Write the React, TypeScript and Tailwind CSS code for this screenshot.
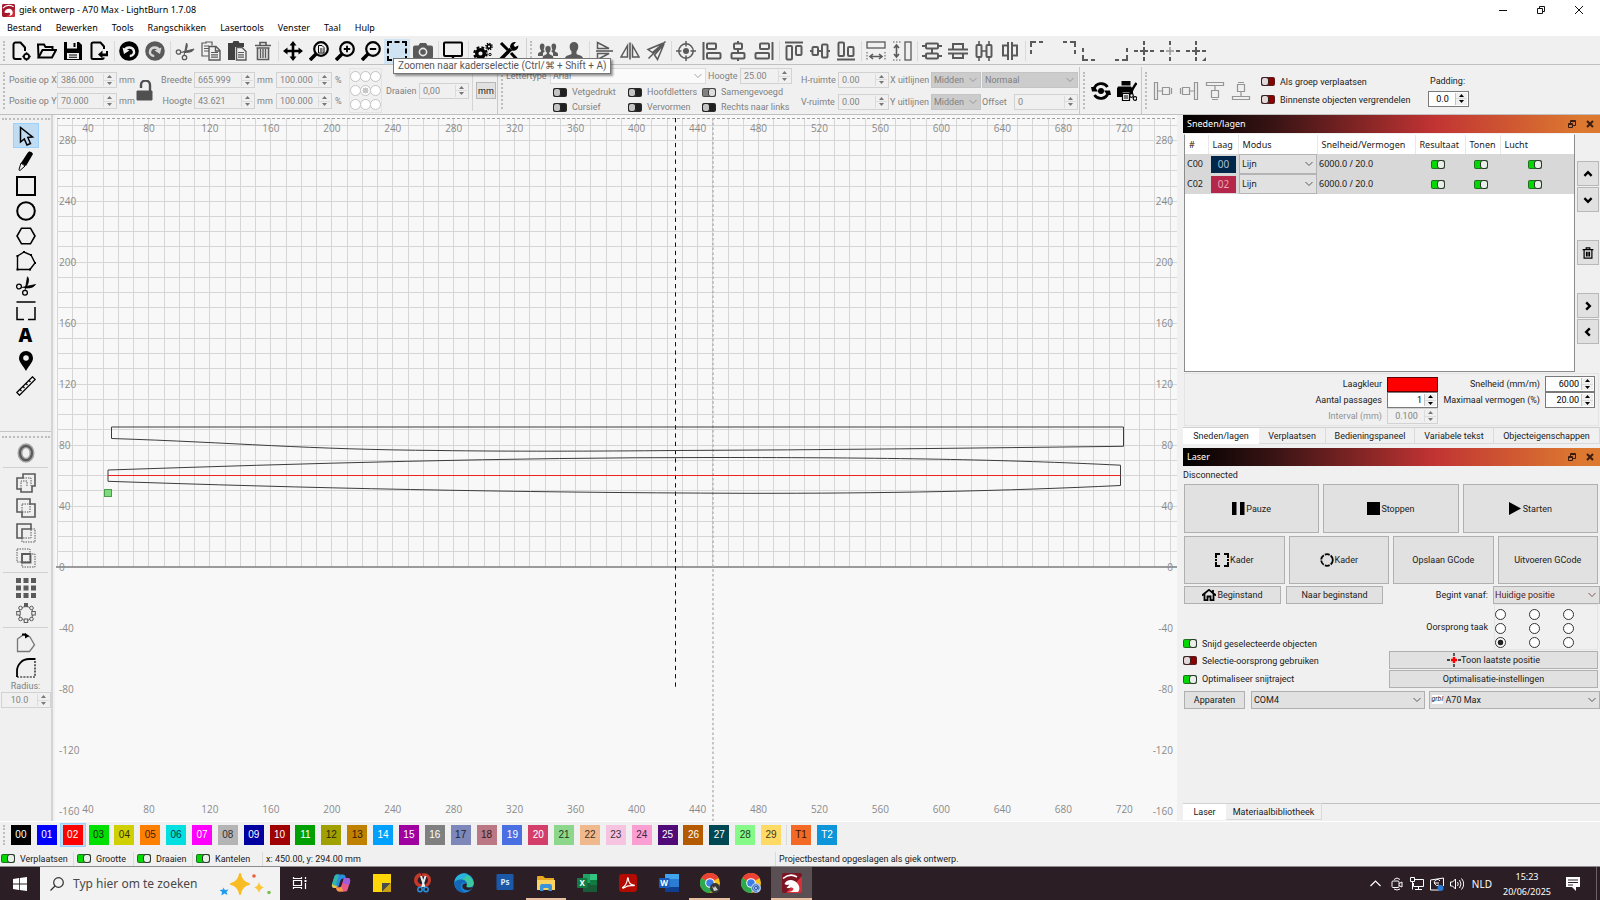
import type { ReactNode } from "react"
import clsx from "clsx"

const swatches: { id: string; cls: string }[] = [
  { id: "00", cls: "bg-black text-white" },
  { id: "01", cls: "bg-[#0000ff] text-white" },
  { id: "02", cls: "bg-[#ff0000] text-white" },
  { id: "03", cls: "bg-[#00e000] text-[#202020]" },
  { id: "04", cls: "bg-[#d0d000] text-[#303000]" },
  { id: "05", cls: "bg-[#ff8000] text-[#402000]" },
  { id: "06", cls: "bg-[#00e0e0] text-[#003838]" },
  { id: "07", cls: "bg-[#ff00ff] text-white" },
  { id: "08", cls: "bg-[#b4b4b4] text-[#303030]" },
  { id: "09", cls: "bg-[#0000a0] text-white" },
  { id: "10", cls: "bg-[#a00000] text-white" },
  { id: "11", cls: "bg-[#00a000] text-white" },
  { id: "12", cls: "bg-[#a0a000] text-[#282800]" },
  { id: "13", cls: "bg-[#c08000] text-[#302000]" },
  { id: "14", cls: "bg-[#00a0ff] text-white" },
  { id: "15", cls: "bg-[#a000a0] text-white" },
  { id: "16", cls: "bg-[#808080] text-white" },
  { id: "17", cls: "bg-[#7d87b9] text-[#20202c]" },
  { id: "18", cls: "bg-[#bb7784] text-[#301c20]" },
  { id: "19", cls: "bg-[#4a6fe3] text-white" },
  { id: "20", cls: "bg-[#d33f6a] text-white" },
  { id: "21", cls: "bg-[#8cd78c] text-[#203820]" },
  { id: "22", cls: "bg-[#f0b98d] text-[#403020]" },
  { id: "23", cls: "bg-[#f6c4e1] text-[#403038]" },
  { id: "24", cls: "bg-[#fa9ed4] text-[#402838]" },
  { id: "25", cls: "bg-[#500a78] text-white" },
  { id: "26", cls: "bg-[#b45a00] text-white" },
  { id: "27", cls: "bg-[#004754] text-white" },
  { id: "28", cls: "bg-[#86fa88] text-[#204020]" },
  { id: "29", cls: "bg-[#ffdb66] text-[#403818]" },
]

const menus = ["Bestand", "Bewerken", "Tools", "Rangschikken", "Lasertools", "Venster", "Taal", "Hulp"]

/* ---------- small building blocks ---------- */

function Svg({ children, size = 20 }: { children: ReactNode; size?: number }) {
  return (
    <svg
      width={size}
      height={size}
      viewBox="0 0 20 20"
      fill="none"
      stroke="currentColor"
      strokeWidth="2"
      className="shrink-0"
      aria-hidden="true"
    >
      {children}
    </svg>
  )
}

function ToolButton({ label, active, dim, children }: { label: string; active?: boolean; dim?: boolean; children: ReactNode }) {
  return (
    <button
      aria-label={label}
      className={clsx(
        "flex h-[25px] w-[26px] shrink-0 items-center justify-center",
        active && "bg-[#cfe3f3]",
        dim ? "text-[#5a5a5a]" : "text-black",
      )}
    >
      <Svg>{children}</Svg>
    </button>
  )
}

function Sep() {
  return <div className="mx-px h-5 w-[2px] shrink-0 border-r border-[#dadada]" />
}

function Handle() {
  return <div className="mx-[3px] h-[80%] w-[2px] shrink-0 border-l-2 border-dotted border-[#bdbdbd]" />
}

function Stepper({ dim }: { dim?: boolean }) {
  return (
    <span className={clsx("flex w-3 shrink-0 flex-col border-l", dim ? "border-[#dcdcdc] text-[#777]" : "border-[#c4c4c4] text-black")}>
      <button tabIndex={-1} aria-label="+" className="flex flex-1 items-center justify-center border-b border-[#dcdcdc] bg-[#f0f0f0]">
        <svg width="5" height="3" viewBox="0 0 5 3" fill="currentColor"><path d="M0 3 2.5 0 5 3z" /></svg>
      </button>
      <button tabIndex={-1} aria-label="-" className="flex flex-1 items-center justify-center bg-[#f0f0f0]">
        <svg width="5" height="3" viewBox="0 0 5 3" fill="currentColor"><path d="M0 0 2.5 3 5 0z" /></svg>
      </button>
    </span>
  )
}

type SpinProps = { id: string; value: string; box: string; dim?: boolean; align?: string }

function Spin({ id, value, box, dim, align }: SpinProps) {
  return (
    <span className={clsx("flex h-4 shrink-0 border p-px", box, dim ? "border-[#d2d2d2] bg-[#f0f0f0]" : "border-[#7a7a7a] bg-white")}>
      <input
        id={id}
        defaultValue={value}
        className={clsx("w-0 min-w-0 flex-1 bg-transparent px-[2px] outline-none", align, dim ? "text-[#838383]" : "text-black")}
      />
      <Stepper dim={dim} />
    </span>
  )
}

type ToggleProps = { label: string; on?: boolean; bare?: boolean; tone: "green" | "red" | "dark" | "grey"; className?: string }

function Toggle({ label, on, bare, tone, className }: ToggleProps) {
  const tones = {
    green: "bg-[#00d800] after:bg-[#e6f0e6] after:border-[#303030]",
    red: "bg-[#8c0000] after:bg-[#e4d8d8] after:border-[#302020]",
    dark: "bg-[#202020] after:bg-[#c4c4c4] after:border-[#202020]",
    grey: "bg-[#808080] after:bg-[#dedede] after:border-[#404040]",
  }
  return (
    <label className={clsx("flex items-center gap-[5px] whitespace-nowrap", className)}>
      <input
        type="checkbox"
        defaultChecked={on}
        aria-label={label}
        className={clsx(
          "flex h-[9px] w-[14px] shrink-0 appearance-none rounded-[2px] border border-[#303030]/60 after:-my-px after:w-[8px] after:rounded-[3px] after:border after:content-['']",
          on ? "justify-end after:-mr-px" : "after:-ml-px",
          tones[tone],
        )}
      />
      {!bare && label}
    </label>
  )
}

function Select({ id, value, className, selectClass, name }: { id: string; value: string; className: string; selectClass?: string; name?: string }) {
  return (
    <span className={clsx("relative flex border", className)}>
      <select id={id} aria-label={name} className={clsx("w-full appearance-none bg-transparent outline-none", selectClass ?? "px-[2px]")}>
        <option>{value}</option>
      </select>
      <svg
        width="8"
        height="5"
        viewBox="0 0 8 5"
        fill="none"
        stroke="currentColor"
        className="pointer-events-none absolute top-1/2 right-[3px] -translate-y-1/2 opacity-70"
        aria-hidden="true"
      >
        <path d="M.5.5 4 4 7.5.5" />
      </svg>
    </span>
  )
}

/* ---------- top bars ---------- */

function TitleBar() {
  return (
    <header className="flex h-5 items-center bg-white pr-4 pl-[2px] font-['Noto_Sans',sans-serif] text-black">
      <svg width="13" height="13" viewBox="0 0 28 28" aria-hidden="true">
        <rect width="28" height="28" rx="3" fill="#a3192c" />
        <path d="M28 10v15q0 3-3 3H8z" fill="#c8303c" />
        <path d="M2 9C8 2 18 1 25 6" stroke="#fff" strokeWidth="2.5" fill="none" />
        <path d="M5 18c1-5 5-8 10-8 6 0 9 5 8 10-1 4-4 6-8 6 3-2 4-6 1-7-4-1-7 2-11-1z" fill="#fff" />
      </svg>
      <h1 className="ml-1 flex-1">giek ontwerp - A70 Max - LightBurn 1.7.08</h1>
      <div className="flex gap-7">
        <button aria-label="Minimaliseren">
          <svg width="10" height="10" stroke="#111"><path d="M1 5.5h8" /></svg>
        </button>
        <button aria-label="Vorig formaat">
          <svg width="10" height="10" fill="none" stroke="#111"><path d="M1.5 3.5h5v5h-5zM3.5 3V1.5h5v5H7" /></svg>
        </button>
        <button aria-label="Sluiten">
          <svg width="10" height="10" stroke="#111"><path d="m1 1 8 8M9 1 1 9" /></svg>
        </button>
      </div>
    </header>
  )
}

function MenuBar() {
  return (
    <nav className="flex h-4 items-center gap-[14px] bg-white pl-[7px] font-['Noto_Sans',sans-serif] text-black">
      {menus.map((m) => (
        <button key={m}>{m}</button>
      ))}
    </nav>
  )
}

function MainToolbar() {
  return (
    <div className="flex h-[29px] items-center border-b border-[#c0c0c0] bg-[#f0f0f0] pt-[2px]">
      <Handle />
      <ToolButton label="Nieuw">
        <path d="M10.5 18h-6a2 2 0 0 1-2-2V3.5a2 2 0 0 1 2-2h5l4.500 5V10" />
        <circle cx="15.5" cy="15.5" r="2.6" strokeWidth="1.8" />
        <path d="M15.5 11.300v1.500M15.5 18.200v1.500M11.300 15.500h1.500M18.200 15.500h1.500" strokeWidth="1.5" />
      </ToolButton>
      <ToolButton label="Openen">
        <path d="M1.5 16 1 3.5h6L8.500 6h7v3" />
        <path d="m1.5 16.500 4-7.500H19l-4 7.500z" />
      </ToolButton>
      <ToolButton label="Opslaan">
        <path d="M1 1h15l3 3v15H1z" fill="currentColor" stroke="none" />
        <path d="M4 1h10v6.500H4zM4 12h12v6H4z" fill="#f0f0f0" stroke="none" />
        <path d="M10.500 2h2v4h-2zM6 13.500h8v1H6zM6 15.700h8v1H6z" fill="currentColor" stroke="none" />
      </ToolButton>
      <ToolButton label="Importeren">
        <path d="M15 8V5.500l-3.500-4H4A1.500 1.500 0 0 0 2.500 3v13.500A1.500 1.500 0 0 0 4 18h9a2 2 0 0 0 2-1.500" />
        <path d="m9 13.500 4.500-4v3H17V10h2v5.200h-5.500v2.300z" fill="currentColor" stroke="none" />
      </ToolButton>
      <Sep />
      <ToolButton label="Ongedaan maken">
        <circle cx="10" cy="10" r="9.8" fill="currentColor" stroke="none" />
        <path d="M5.500 9.500C7 6 13 5 14.800 9.500c1 3-1 5.500-4 5.500" stroke="#f0f0f0" strokeWidth="2.4" />
        <path d="M3.500 6.500 5 13l5.500-3.500z" fill="#f0f0f0" stroke="none" />
      </ToolButton>
      <ToolButton label="Opnieuw" dim>
        <circle cx="10" cy="10" r="9.8" fill="currentColor" stroke="none" />
        <path d="M14.500 9.500C13 6 7 5 5.200 9.500c-1 3 1 5.500 4 5.500" stroke="#d8d8d8" strokeWidth="2.4" />
        <path d="M16.500 6.500 15 13l-5.500-3.500z" fill="#d8d8d8" stroke="none" />
      </ToolButton>
      <Sep />
      <ToolButton label="Knippen" dim>
        <circle cx="3.5" cy="11" r="2.2" strokeWidth="1.3" />
        <circle cx="9.5" cy="16.5" r="2.2" strokeWidth="1.3" />
        <path d="M5.500 11.500 19 8c-1 2.500-4 3.500-9 3.500M9 14.500 11.500 2c1.500 2 .5 6-1.500 10" fill="currentColor" strokeWidth="1" />
      </ToolButton>
      <ToolButton label="Kopiëren" dim>
        <path d="M11 4.500V1H5v1H1v13h6.500" strokeWidth="1.2" />
        <path d="M3 5h5M3 7.500h5M3 10h5" strokeWidth="1" />
        <path d="M8 5.500h7l4 4V19H8zM14.500 6v4H19" strokeWidth="1.4" />
        <path d="M10 11.500h7M10 13.800h7M10 16.200h7" strokeWidth="1.2" />
      </ToolButton>
      <ToolButton label="Plakken" dim>
        <path d="M1 2h4.500l1-2h5l1 2H17v4H8v13H1z" fill="#404040" stroke="none" />
        <path d="M9.500 6.500H15l4 4V19H9.500z" fill="#f0f0f0" strokeWidth="1.4" />
        <path d="M11 11.500h6M11 13.800h6M11 16.200h6" strokeWidth="1.2" />
      </ToolButton>
      <ToolButton label="Verwijderen" dim>
        <path d="M2 4.500h16M7 4V1.500h6V4M3.500 7h13M4.500 7v11.500h11V7" strokeWidth="1.6" />
        <path d="M7.500 8v9M10 8v9M12.500 8v9" strokeWidth="1.4" />
      </ToolButton>
      <Sep />
      <ToolButton label="Verschuiven">
        <path d="M10 2v16M2 10h16" strokeWidth="2.6" />
        <path d="m10 0 3.500 4.500h-7zM10 20l3.500-4.500h-7zM0 10l4.500-3.500v7zM20 10l-4.500-3.500v7z" fill="currentColor" stroke="none" />
      </ToolButton>
      <ToolButton label="Zoom naar pagina">
        <circle cx="12" cy="8" r="6.8" strokeWidth="2.2" />
        <path d="m7 13-6 6" strokeWidth="3.6" />
        <path d="M9.500 4.500H13l2 2V12H9.500zM11 8h2.500M11 10h2.500" strokeWidth="1" />
      </ToolButton>
      <ToolButton label="Inzoomen">
        <circle cx="12" cy="8" r="6.8" strokeWidth="2.2" />
        <path d="m7 13-6 6" strokeWidth="3.6" />
        <path d="M12 4.800v6.400M8.800 8h6.400" strokeWidth="1.8" />
      </ToolButton>
      <ToolButton label="Uitzoomen">
        <circle cx="12" cy="8" r="6.8" strokeWidth="2.2" />
        <path d="m7 13-6 6" strokeWidth="3.6" />
        <path d="M8.800 8h6.400" />
      </ToolButton>
      <ToolButton label="Zoomen naar kaderselectie" active>
        <path d="M1 5V1h4M7.500 1h5M15 1h4v4M19 7.500v5M19 15v4h-4M12.500 19h-5M5 19H1v-4M1 12.500v-5" />
      </ToolButton>
      <ToolButton label="Camera" dim>
        <path d="M0 6.500q0-2 2-2h3.500L7 2h6l1.500 2.500H18q2 0 2 2V16q0 2-2 2H2q-2 0-2-2z" fill="currentColor" stroke="none" />
        <circle cx="10" cy="11" r="3.6" stroke="#e8e8e8" strokeWidth="1.6" />
      </ToolButton>
      <Sep />
      <ToolButton label="Voorbeeld">
        <rect x="1" y="1.5" width="18" height="13.5" rx="1" />
        <path d="M6 18.500h8M10 15v3" strokeWidth="2.4" />
      </ToolButton>
      <Sep />
      <ToolButton label="Instellingen">
        <circle cx="7.5" cy="12.5" r="3.8" strokeWidth="3.4" />
        <circle cx="7.5" cy="12.5" r="6.2" strokeWidth="2.2" strokeDasharray="2.8 2.1" />
        <circle cx="16" cy="5.5" r="1.9" strokeWidth="1.6" />
        <circle cx="16" cy="5.5" r="3.2" strokeWidth="1.3" strokeDasharray="1.3 1.2" />
        <circle cx="17" cy="13.5" r="1.2" strokeWidth="1" />
      </ToolButton>
      <ToolButton label="Apparaatinstellingen">
        <path d="m2 2 7 7M12 12l6 6.500" strokeWidth="3" />
        <path d="M1.500 18.500 12 8" strokeWidth="3.6" />
        <path d="M11 6a5 5 0 0 1 6-5l-2.500 3L16 6l3.500-1.500A5 5 0 0 1 13 9.500z" fill="currentColor" stroke="none" />
      </ToolButton>
      <div className="h-full w-[5px] shrink-0 border-r border-[#d0d0d0]" />
      <Handle />
      <ToolButton label="Groeperen" dim>
        <path d="M4 2.500a2.500 2.800 0 0 1 2.500 3c0 2-.8 2.800-1 3.500L7 10l-2 2v3H0v-2c0-1.500 2-2 3-2.500V9.200C1.500 8 1 2.500 4 2.500zM16 2.500a2.500 2.800 0 0 0-2.500 3c0 2 .8 2.800 1 3.500L13 10l2 2v3h5v-2c0-1.500-2-2-3-2.500V9.200c1.500-1.200 2-6.700-1-6.700z" fill="currentColor" stroke="none" />
        <path d="M10 4.500c4 0 3.500 5.500 1.700 7V13c1.300.8 4 1.200 4 3v3H4.300v-3c0-1.800 2.700-2.200 4-3v-1.500C6.500 10 6 4.500 10 4.500z" fill="currentColor" stroke="#f0f0f0" strokeWidth=".8" />
      </ToolButton>
      <ToolButton label="Degroeperen" dim>
        <path d="M10 1c5.500 0 5 7 2.500 9.500V13c2 1.200 6.500 1.500 6.500 4.500V19H1v-1.500C1 14.500 5.500 14.200 7.500 13v-2.500C5 8 4.500 1 10 1z" fill="currentColor" stroke="none" />
      </ToolButton>
      <Sep />
      <ToolButton label="Verticaal spiegelen" dim>
        <path d="M3.500 1.500v6H15zM3.500 18.500v-6H15z" strokeWidth="1.5" />
        <path d="M2 10h17" strokeWidth="1.6" />
      </ToolButton>
      <ToolButton label="Horizontaal spiegelen" dim>
        <path d="M7.500 4.500V16H1zM12.500 4.500V16H19z" strokeWidth="1.5" />
        <path d="M10 1.500v17" strokeWidth="1.6" />
      </ToolButton>
      <ToolButton label="Spiegelen over lijn" dim>
        <path d="M17.500 2 2 8.500l4.500 3zM18 3l-6.500 15.500-3-4.500zM19.500.5l-17 17" strokeWidth="1.5" />
      </ToolButton>
      <Sep />
      <ToolButton label="Op pagina centreren" dim>
        <circle cx="10" cy="10" r="7.2" strokeWidth="1.5" />
        <circle cx="10" cy="10" r="3" fill="currentColor" stroke="none" />
        <path d="M10 0v5.500M10 14.500V20M0 10h5.500M14.500 10H20" strokeWidth="1.5" />
      </ToolButton>
      <ToolButton label="Links uitlijnen" dim>
        <path d="M1.500 1v18" />
        <rect x="5" y="2.5" width="9" height="5.5" rx="1" />
        <rect x="5" y="12" width="13.5" height="5.5" rx="1" />
      </ToolButton>
      <ToolButton label="Centreren" dim>
        <path d="M10 0v2.500M10 8v4M10 17.500V20" />
        <rect x="6" y="2.5" width="8" height="5.5" rx="1" />
        <rect x="3.5" y="12" width="13" height="5.5" rx="1" />
      </ToolButton>
      <ToolButton label="Rechts uitlijnen" dim>
        <path d="M18.500 1v18" />
        <rect x="6" y="2.5" width="9" height="5.5" rx="1" />
        <rect x="1.5" y="12" width="13.5" height="5.5" rx="1" />
      </ToolButton>
      <Sep />
      <ToolButton label="Boven uitlijnen" dim>
        <path d="M1 1.500h18" />
        <rect x="2.5" y="5" width="5.5" height="13.5" rx="1" />
        <rect x="12" y="5" width="5.5" height="9" rx="1" />
      </ToolButton>
      <ToolButton label="Midden uitlijnen" dim>
        <path d="M0 10h2.500M8 10h4M17.500 10H20" />
        <rect x="2.5" y="6" width="5.5" height="8" rx="1" />
        <rect x="12" y="3.5" width="5.5" height="13" rx="1" />
      </ToolButton>
      <ToolButton label="Onder uitlijnen" dim>
        <path d="M1 18.500h18" />
        <rect x="2.5" y="1.5" width="5.5" height="13.5" rx="1" />
        <rect x="12" y="6" width="5.5" height="9" rx="1" />
      </ToolButton>
      <Sep />
      <ToolButton label="Zelfde breedte" dim>
        <rect x="1" y="1" width="18" height="6" strokeWidth="1.3" />
        <path d="M1 11v8M19 11v8" strokeWidth="1" strokeDasharray="1.5 1.5" />
        <path d="M4 15.500h12M7 13l-3 2.500L7 18M13 13l3 2.500-3 2.500" strokeWidth="1.6" />
      </ToolButton>
      <ToolButton label="Zelfde hoogte" dim>
        <rect x="13" y="1" width="6" height="18" strokeWidth="1.3" />
        <path d="M1 1h8M1 19h8" strokeWidth="1" strokeDasharray="1.5 1.5" />
        <path d="M4.500 4v12M2 7l2.500-3L7 7M2 13l2.500 3L7 13" strokeWidth="1.6" />
      </ToolButton>
      <Sep />
      <ToolButton label="Verticaal verdelen" dim>
        <rect x="4" y="2.5" width="12" height="5" rx="1" />
        <rect x="4" y="12.5" width="12" height="5" rx="1" />
        <path d="M0 5h4M16 5h4M0 15h4M16 15h4M10 7.500v5" />
      </ToolButton>
      <ToolButton label="Verticaal verdelen op midden" dim>
        <path d="M5 8V3h10v5M5 12v5h10v-5M0 8.500h20M0 12.500h20" />
      </ToolButton>
      <ToolButton label="Horizontaal verdelen" dim>
        <rect x="2.5" y="4" width="5" height="12" rx="1" />
        <rect x="12.5" y="4" width="5" height="12" rx="1" />
        <path d="M5 0v4M5 16v4M15 0v4M15 16v4M7.500 10h5" strokeWidth="1.6" />
      </ToolButton>
      <ToolButton label="Horizontaal verdelen op midden" dim>
        <path d="M8 4.500H3v10h5M12 4.500h5v10h-5M8 1v18M12 1v18" />
      </ToolButton>
      <Sep />
      <ToolButton label="Linksboven" dim>
        <path d="M1 13V9M1 6V1h5M9 1h4" />
      </ToolButton>
      <ToolButton label="Rechtsboven" dim>
        <path d="M7 1h4M14 1h5v5M19 9v4" />
      </ToolButton>
      <ToolButton label="Linksonder" dim>
        <path d="M1 7v4M1 14v5h5M9 19h4" />
      </ToolButton>
      <ToolButton label="Rechtsonder" dim>
        <path d="M19 7v4M19 14v5h-5M11 19H7" />
      </ToolButton>
      <ToolButton label="Midden" dim>
        <path d="M10 0v4M10 6v8M10 16v4M0 10h4M6 10h8M16 10h4" />
      </ToolButton>
      <ToolButton label="Laserpositie" dim>
        <path d="M10 0v4M10 16v4M0 10h4M16 10h4" />
        <path d="M10 6v8M6 10h8" strokeWidth="1.4" opacity=".6" />
      </ToolButton>
      <ToolButton label="Verplaats laser" dim>
        <path d="M10 0v4M10 6v8M10 16v4M0 10h4M6 10h8M16 10h4" />
        <path d="M20 16v4h-4z" fill="currentColor" stroke="none" />
      </ToolButton>
    </div>
  )
}

function AnchorDial() {
  return (
    <div className="ml-[5px] grid h-[45px] w-[33px] shrink-0 grid-cols-3 place-items-center border border-[#e4e4e4]">
      {Array.from({ length: 9 }, (_, i) => (
        <input
          key={i}
          type="radio"
          name="anchor"
          aria-label={`Anker ${i + 1}`}
          defaultChecked={i === 4}
          className="size-[11px] appearance-none rounded-full border border-[#c4c4c4] bg-white checked:bg-[radial-gradient(#c8c8c8_45%,#fff_50%)]"
        />
      ))}
    </div>
  )
}

function PropertyToolbar() {
  return (
    <div className="flex h-[50px] items-center border-b border-[#c0c0c0] bg-[#f0f0f0] pt-[2px] text-[#808080]">
      <Handle />
      <div className="ml-px grid shrink-0 gap-y-[5px]">
        <label className="flex items-center gap-[2px]"><span className="w-[46px] text-right whitespace-nowrap">Positie op X</span><Spin id="px" value="386.000" box="w-[60px]" dim /><span className="w-[15px]">mm</span></label>
        <label className="flex items-center gap-[2px]"><span className="w-[46px] text-right whitespace-nowrap">Positie op Y</span><Spin id="py" value="70.000" box="w-[60px]" dim /><span className="w-[15px]">mm</span></label>
      </div>
      <button aria-label="Vergrendel verhouding" className="ml-[2px] text-[#505050]">
        <svg width="17" height="22" viewBox="0 0 17 22" fill="none" stroke="currentColor">
          <path d="M5 8V5a4.500 4.500 0 0 1 9 0v7" strokeWidth="2.4" />
          <path d="M1 11h15v9H1z" fill="currentColor" />
        </svg>
      </button>
      <div className="ml-[6px] grid shrink-0 gap-y-[5px]">
        <label className="flex items-center gap-[2px]"><span className="w-[33px] text-right">Breedte</span><Spin id="w" value="665.999" box="w-[61px]" dim /><span className="w-[15px]">mm</span></label>
        <label className="flex items-center gap-[2px]"><span className="w-[33px] text-right">Hoogte</span><Spin id="h" value="43.621" box="w-[61px]" dim /><span className="w-[15px]">mm</span></label>
      </div>
      <div className="ml-1 grid shrink-0 gap-y-[5px]">
        <label className="flex items-center gap-[3px]"><Spin id="sw" value="100.000" box="w-[56px]" dim /><span className="w-[9px]">%</span></label>
        <label className="flex items-center gap-[3px]"><Spin id="sh" value="100.000" box="w-[56px]" dim /><span className="w-[9px]">%</span></label>
      </div>
      <AnchorDial />
      <label className="ml-1 flex items-center"><span className="w-[33px]">Draaien</span><Spin id="rot" value="0,00" box="w-[50px]" dim /></label>
      <div className="ml-[3px] h-10 w-px bg-[#d4d4d4]" />
      <button className="ml-[3px] h-[17px] w-[20px] shrink-0 border border-[#b8b8b8] bg-[#e1e1e1] text-[#202020]">mm</button>
      <div className="h-full w-[2px] border-r border-[#c8c8c8]" />
      <Handle />

      <div className="flex w-[288px] shrink-0 flex-col gap-[2px]">
        <div className="flex items-center gap-[2px]">
          <label htmlFor="font" className="w-[42px]">Lettertype</label>
          <Select id="font" value="Arial" className="h-4 w-[156px] border-[#dcdcdc] bg-[#fafafa]" />
          <label htmlFor="fh" className="w-[30px]">Hoogte</label>
          <Spin id="fh" value="25.00" box="w-[52px]" dim />
        </div>
        <div className="ml-[47px] grid grid-cols-[75px_74px_auto]">
          <Toggle label="Vetgedrukt" tone="dark" />
          <Toggle label="Hoofdletters" tone="dark" />
          <Toggle label="Samengevoegd" tone="grey" on />
          <Toggle label="Cursief" tone="dark" className="mt-[3px]" />
          <Toggle label="Vervormen" tone="dark" className="mt-[3px]" />
          <Toggle label="Rechts naar links" tone="dark" className="mt-[3px]" />
        </div>
      </div>
      <div className="ml-[7px] grid shrink-0 grid-cols-[36px_51px_40px_50px] items-center gap-x-px gap-y-[6px] whitespace-nowrap">
        <label htmlFor="hs">H-ruimte</label>
        <Spin id="hs" value="0.00" box="w-[51px]" dim />
        <label htmlFor="xa">X uitlijnen</label>
        <Select id="xa" value="Midden" className="h-4 border-[#c4c4c4] bg-[#cccccc]" />
        <label htmlFor="vs">V-ruimte</label>
        <Spin id="vs" value="0.00" box="w-[51px]" dim />
        <label htmlFor="ya">Y uitlijnen</label>
        <Select id="ya" value="Midden" className="h-4 border-[#c4c4c4] bg-[#cccccc]" />
      </div>
      <div className="ml-px flex shrink-0 flex-col gap-[6px]">
        <Select id="mode" name="Modus" value="Normaal" className="h-4 w-[96px] border-[#c4c4c4] bg-[#cccccc]" />
        <label className="flex items-center justify-between">Offset<Spin id="off" value="0" box="w-[64px]" dim /></label>
      </div>
      <div className="h-full w-[2px] border-r border-[#c8c8c8]" />
      <Handle />
      <ToolButton label="Vernieuwen">
        <circle cx="10" cy="10" r="3" fill="currentColor" stroke="none" />
        <path d="M3 8a7.500 7.500 0 0 1 13.500-2M17 12a7.500 7.500 0 0 1-13.500 2" strokeWidth="2.8" />
        <path d="M0 6h4l3 4.500H1zM20 14h-4l-3-4.500h6z" fill="currentColor" stroke="none" />
      </ToolButton>
      <ToolButton label="Printen en snijden">
        <path d="M4.500 0h9v4.500h-9zM1 5.500h13l2 3v4.500h-3.500v-1.500h-7V16H0V7.500z" fill="currentColor" stroke="none" />
        <path d="M5.500 12.500h7v7h-7zM7 15h4M7 17h4" strokeWidth="1.2" />
        <path d="M19.500 2c-2 3-4 5-5.500 10" strokeWidth="2.4" />
        <circle cx="14.5" cy="14.5" r="1.8" strokeWidth="1.2" />
        <circle cx="18" cy="17.5" r="1.8" strokeWidth="1.2" />
      </ToolButton>
      <div className="h-full w-[2px] border-r border-[#c8c8c8]" />
      <Handle />
      <div className="flex opacity-60">
        <ToolButton label="Naar links" dim>
          <path d="M1.500 1.500h3v17h-3zM9.500 6.500h7v7h-7zM5 10h4M18.500 7v6" strokeWidth="1.2" />
        </ToolButton>
        <ToolButton label="Naar rechts" dim>
          <path d="M15.500 1.500h3v17h-3zM3.500 6.500h7v7h-7zM11 10h4M1.500 7v6" strokeWidth="1.2" />
        </ToolButton>
        <ToolButton label="Naar boven" dim>
          <path d="M1.500 1.500h17v3h-17zM6.500 9.500h7v7h-7zM10 5v4M7 18.500h6" strokeWidth="1.2" />
        </ToolButton>
        <ToolButton label="Naar onder" dim>
          <path d="M1.500 15.500h17v3h-17zM6.500 3.500h7v7h-7zM10 11v4M7 1.500h6" strokeWidth="1.2" />
        </ToolButton>
      </div>
      <div className="ml-[7px] flex w-[152px] flex-col gap-[6px] text-[#202020]">
        <Toggle label="Als groep verplaatsen" tone="red" />
        <Toggle label="Binnenste objecten vergrendelen" tone="red" />
      </div>
      <label className="ml-[15px] flex flex-col gap-1 text-[#202020]">
        <span className="pl-[2px]">Padding:</span>
        <Spin id="pad" value="0.0" box="w-[41px]" align="text-center" />
      </label>
    </div>
  )
}

/* ---------- left tools ---------- */

function SideTool({ label, active, dim, children }: { label: string; active?: boolean; dim?: boolean; children: ReactNode }) {
  return (
    <button
      aria-label={label}
      className={clsx("flex h-[25px] w-[26px] items-center justify-center", active && "border border-[#99d1ff] bg-[#c0dcf3]", dim ? "text-[#5a5a5a]" : "text-black")}
    >
      <Svg>{children}</Svg>
    </button>
  )
}

function SideSep() {
  return <div className="my-[2px] h-px w-[45px] bg-[#d0d0d0]" />
}

function SideTools() {
  return (
    <aside className="flex w-[53px] shrink-0 flex-col items-center border-r-2 border-[#d4d4d4] bg-[#f0f0f0] pt-[3px]">
      <div className="mb-[3px] h-[2px] w-12 border-t-2 border-dotted border-[#bdbdbd]" />
      <SideTool label="Selecteren" active>
        <path d="M4.500 1.500V16l3.800-3 2.700 6 3.500-1.500-2.700-6 4.700-.5z" strokeWidth="1.5" />
      </SideTool>
      <SideTool label="Lijnen tekenen">
        <path d="M11.500 2 13 .5q3-.5 4 2.500l-7 12L5 12z" fill="currentColor" stroke="none" />
        <path d="m5 12 4 3-5 4.500q-1 0-1-1z" strokeWidth="1" />
      </SideTool>
      <SideTool label="Rechthoek"><path d="M1 1h18v18H1z" /></SideTool>
      <SideTool label="Ellips"><circle cx="10" cy="10" r="8.8" /></SideTool>
      <SideTool label="Veelhoek"><path d="M5.500 2.200h9L19 10l-4.500 7.800h-9L1 10z" strokeWidth="1.6" /></SideTool>
      <SideTool label="Knopen bewerken">
        <path d="M1.500 5 8 1l7 3 4 8-5 6.500H1.500z" strokeWidth="1.4" />
        <path d="M.5 4h2v2h-2zM7 0h2v2H7zM14 3h2v2h-2zM18 11h2v2h-2zM13 17.500h2v2h-2zM.5 17.500h2v2h-2z" fill="currentColor" stroke="none" />
      </SideTool>
      <SideTool label="Vormen trimmen">
        <circle cx="3" cy="10.5" r="2.4" strokeWidth="1.3" />
        <circle cx="9" cy="16.8" r="2.4" strokeWidth="1.3" />
        <path d="M5.500 11.500 19.500 8.500c-2 3-5 3.500-10 3.500M9 14.500 11.500.8c2 3 1 6-1.500 11.200" fill="currentColor" strokeWidth=".8" />
      </SideTool>
      <SideTool label="Tabs"><path d="M.5 1h19M8 18.500H1V6M12 18.500h7V6" strokeWidth="1.5" /></SideTool>
      <button className="h-[25px] w-[26px] text-center font-['Open_Sans',sans-serif] text-[19px] leading-[25px] font-extrabold text-black">A</button>
      <SideTool label="Positie">
        <path d="M10 0a7 7 0 0 1 7 7c0 4.500-4.500 8-7 13C7.500 15 3 11.500 3 7a7 7 0 0 1 7-7zm0 4.200a2.800 2.800 0 1 0 0 5.600 2.800 2.800 0 0 0 0-5.600z" fill="currentColor" stroke="none" fillRule="evenodd" />
      </SideTool>
      <SideTool label="Meten">
        <path d="M.8 16.500 16.500.8l2.700 2.700L3.500 19.200z" strokeWidth="1.3" />
        <path d="m4 13.500 1.500 1.500M7 10.500 8.500 12M10 7.500 11.500 9M13 4.500 14.500 6" strokeWidth="1.2" />
      </SideTool>

      <div className="mt-[33px] h-px w-full bg-[#c4c4c4]" />
      <div className="mt-1 mb-[2px] h-[2px] w-12 border-t-2 border-dotted border-[#bdbdbd]" />
      <SideTool label="Offset" dim>
        <ellipse cx="10" cy="10" rx="6" ry="7.2" strokeWidth="5" stroke="#a4a4a4" />
        <ellipse cx="10" cy="10" rx="6" ry="7.2" strokeWidth="2.2" />
      </SideTool>
      <SideSep />
      <SideTool label="Verenigen" dim>
        <path d="M7 1h12v12h-3v6H5v-3H1V5h6z" strokeWidth="1.6" />
        <path d="M7 5h8v8M5 16V8h6v6" strokeWidth="1" strokeDasharray="1.5 1" />
      </SideTool>
      <SideTool label="Samenvoegen" dim>
        <path d="M1 1h13v5h5v13H6v-5H1z" strokeWidth="1.6" />
        <path d="M6 6h8v8H6z" strokeWidth="1" strokeDasharray="1.5 1" />
      </SideTool>
      <SideTool label="Aftrekken" dim>
        <path d="M1 1h14v5H6v9H1z" strokeWidth="1.6" />
        <path d="M15 6h4v13H6v-4h9z" strokeWidth="1" strokeDasharray="1.5 1" />
      </SideTool>
      <SideTool label="Doorsnede" dim>
        <path d="M1 1h13v13H1zM6 6h13v13H6z" strokeWidth="1" strokeDasharray="1.5 1" />
        <path d="M6 6h8.500v8.500H6z" strokeWidth="1.8" />
      </SideTool>
      <SideSep />
      <SideTool label="Raster" dim>
        <path d="M0 0h5v5H0zM7.500 0h5v5h-5zM15 0h5v5h-5zM0 7.500h5v5H0zM7.500 7.500h5v5h-5zM15 7.500h5v5h-5zM0 15h5v5H0zM7.500 15h5v5h-5zM15 15h5v5h-5z" fill="currentColor" stroke="none" />
      </SideTool>
      <SideTool label="Cirkelreeks" dim>
        <circle cx="10" cy="10.5" r="7" strokeWidth="1" />
        <g fill="#f0f0f0" strokeWidth="1">
          <rect x=".7" y="8.5" width="3.5" height="3.5" /><rect x="15.8" y="8.5" width="3.5" height="3.5" /><rect x="8.2" y="16" width="3.5" height="3.5" />
          <circle cx="4.5" cy="5" r="1.8" /><circle cx="15.5" cy="5" r="1.8" /><circle cx="4.5" cy="16" r="1.8" /><circle cx="15.5" cy="16" r="1.8" />
        </g>
        <path d="M8 0h4v4H8z" fill="currentColor" stroke="none" />
      </SideTool>
      <SideSep />
      <SideTool label="Startpunt" dim>
        <path d="M1.500 6 7 2l7 2 4.500 8-5 6.500h-12z" strokeWidth="1.3" stroke="#777" />
        <path d="M6 1.500h4" stroke="#000" />
        <path d="m9 0 4.500 3L9 5.500z" fill="#000" stroke="none" />
      </SideTool>
      <SideTool label="Afronden">
        <path d="M1 19v-6A12 12 0 0 1 13 1h6.500" strokeWidth="1.8" />
        <path d="M19 3v16H1" strokeWidth="1.2" strokeDasharray="2 1.2" />
      </SideTool>
      <label htmlFor="radius" className="text-[#808080]">Radius:</label>
      <Spin id="radius" value="10.0" box="w-[50px]" align="text-center" dim />
    </aside>
  )
}

/* ---------- work area ---------- */

const UNIT = 1.524
const ORIGIN_X = -28
const ORIGIN_Y = 452
const xTicks = Array.from({ length: 18 }, (_, i) => 40 + i * 40)
const yTicks = Array.from({ length: 12 }, (_, i) => 280 - i * 40)
const gridX = Array.from({ length: 130 }, (_, i) => 20 + i * 10)
const gridY = Array.from({ length: 29 }, (_, i) => 10 + i * 10)

function WorkArea() {
  return (
    <main className="min-w-0 flex-1 bg-[#f8f8f8]">
      <svg width="100%" height="100%" className="block" role="img" aria-label="Werkgebied">
        <g stroke="#d6d6d6" shapeRendering="crispEdges">
          {gridX.map((u) => (
            <line key={u} x1={ORIGIN_X + u * UNIT} x2={ORIGIN_X + u * UNIT} y1="3" y2={ORIGIN_Y} />
          ))}
          {gridY.map((u) => (
            <line key={u} x1="2" x2="100%" y1={ORIGIN_Y - u * UNIT} y2={ORIGIN_Y - u * UNIT} />
          ))}
        </g>
        <line x1="2" x2="100%" y1="3.5" y2="3.5" stroke="#a0a0a0" strokeDasharray="3 2" />
        <line x1="1" x2="100%" y1={ORIGIN_Y} y2={ORIGIN_Y} stroke="#7c7c7c" strokeWidth="1.5" />
        <line x1="658" x2="658" y1="3" y2="100%" stroke="#b4b4b4" strokeWidth="1.5" strokeDasharray="2.5 2.3" />
        <line x1="620.5" x2="620.5" y1="3" y2="574" stroke="#111" strokeDasharray="4.3 4" />

        <g fill="none" stroke="#3c3c3c">
          <path d="M56.5 312H1068.5V331.3C920 333 770 335 620 335.5C540 336.3 450 336.5 385 335.5C250 334.5 180 327.5 56.5 323.5Z" />
          <path d="M53 355C250 348.5 450 342.5 660 342.5C830 342.5 950 344.5 1065.5 350.2V370.5C950 376 830 378.5 690 378.3C450 377.5 250 373 53 366.3Z" />
        </g>
        <path d="M53 360.5H1065.5" stroke="#ee2222" />
        <rect x="49.5" y="374.5" width="7" height="7" fill="#7cdc7c" stroke="#4c9c4c" />

        <g fill="#8a8a8a" className="font-['Open_Sans',sans-serif] text-[10px]">
          {xTicks.map((u) => (
            <text key={u} x={ORIGIN_X + u * UNIT} y="17" textAnchor="middle">{u}</text>
          ))}
          {xTicks.map((u) => (
            <text key={u} x={ORIGIN_X + u * UNIT} y="698" textAnchor="middle">{u}</text>
          ))}
          {yTicks.map((u) => (
            <text key={u} x="4" y={ORIGIN_Y - u * UNIT + 4}>{u}</text>
          ))}
          <svg x="100%" overflow="visible">
            {yTicks.map((u) => (
              <text key={u} x="-4" y={ORIGIN_Y - u * UNIT + 4} textAnchor="end">{u}</text>
            ))}
          </svg>
        </g>
      </svg>
    </main>
  )
}

/* ---------- right dock ---------- */

function DockTitle({ title }: { title: string }) {
  return (
    <div className="flex h-[18px] shrink-0 items-center bg-[linear-gradient(90deg,#000_0%,#3a1414_22%,#c13333_60%,#dc7830_95%)] px-1 text-white">
      <h2 className="flex-1 font-['Noto_Sans',sans-serif]">{title}</h2>
      <button aria-label="Losmaken" className="mr-[10px]">
        <svg width="8" height="8" fill="none" stroke="#3a1c10"><path d="M.5 3.5h4v4h-4zM2.500 3V.5h5v5H5M2.500 1.500h5M.5 4.500h4" /></svg>
      </button>
      <button aria-label="Sluiten" className="mr-[2px]">
        <svg width="8" height="8" stroke="#3a1c10" strokeWidth="2"><path d="m1 1 6 6M7 1 1 7" /></svg>
      </button>
    </div>
  )
}

const layers = [
  { id: "C00", no: "00", cls: "bg-[#00264a] text-[#a8c0d8]" },
  { id: "C02", no: "02", cls: "bg-[#b4264a] text-[#eca8b8]" },
]

function SmallButton({ label, children }: { label: string; children: ReactNode }) {
  return (
    <button aria-label={label} className="flex h-[25px] w-[22px] items-center justify-center border border-[#b8b8b8] bg-[#e1e1e1] text-black">
      <Svg size={12}>{children}</Svg>
    </button>
  )
}

function Tabs({ items, className }: { items: { label: string; cls: string }[]; className?: string }) {
  return (
    <div className={clsx("flex shrink-0", className)} role="tablist">
      {items.map((t, i) => (
        <button
          key={t.label}
          role="tab"
          aria-selected={i === 0}
          className={clsx(
            "h-[17px] border-t border-[#d0d0d0] whitespace-nowrap text-[#202020]",
            t.cls,
            i === 0 ? "bg-white" : "border-r border-b border-r-[#dadada] border-b-[#dadada]",
          )}
        >
          {t.label}
        </button>
      ))}
    </div>
  )
}

function CutsPanel() {
  return (
    <section>
      <DockTitle title="Sneden/lagen" />
      <div className="mt-px flex gap-[2px] pr-px pl-px">
        <div className="h-[238px] flex-1 border border-[#8c8c8c] border-t-transparent bg-white font-['Noto_Sans',sans-serif] text-[#202020]">
          <table className="w-full table-fixed border-collapse text-left">
            <colgroup>
              <col className="w-[23px]" /><col className="w-[30px]" /><col className="w-[79px]" /><col className="w-[98px]" />
              <col className="w-[50px]" /><col className="w-[35px]" /><col />
            </colgroup>
            <thead>
              <tr className="h-[19px] [&>th]:border-r [&>th]:border-[#e8e8e8] [&>th]:p-0 [&>th]:pl-1 [&>th]:font-normal">
                <th>#</th><th>Laag</th><th>Modus</th><th>Snelheid/Vermogen</th><th>Resultaat</th><th>Tonen</th><th className="border-r-0!">Lucht</th>
              </tr>
            </thead>
            <tbody>
              {layers.map((l) => (
                <tr key={l.id} className="h-5 bg-[#d8d8d8] [&>td]:p-0">
                  <td><span className="pl-[2px]">{l.id}</span></td>
                  <td><span className={clsx("ml-[3px] flex h-[17px] w-[25px] items-center justify-center text-[10px]", l.cls)}>{l.no}</span></td>
                  <td><Select id={`mode-${l.id}`} name="Modus" value="Lijn" className="ml-px h-5 border-[#b4b4b4] bg-[#e1e1e1]" selectClass="px-[2px]" /></td>
                  <td><span className="pl-[2px]">6000.0 / 20.0</span></td>
                  <td><Toggle label="Resultaat" on bare tone="green" className="justify-center pr-1" /></td>
                  <td><Toggle label="Tonen" on bare tone="green" className="justify-center pr-1" /></td>
                  <td><Toggle label="Lucht" on bare tone="green" className="justify-center pr-1" /></td>
                </tr>
              ))}
            </tbody>
          </table>
        </div>
        <div className="flex flex-col gap-px pt-[27px]">
          <SmallButton label="Omhoog"><path d="m4 13 6-6 6 6" strokeWidth="4" /></SmallButton>
          <SmallButton label="Omlaag"><path d="m4 7 6 6 6-6" strokeWidth="4" /></SmallButton>
          <div className="h-[26px]" />
          <SmallButton label="Verwijderen"><path d="M1 4.500h18M7 4V1.500h6V4M3.500 4.500v14h13v-14M7.500 8v8M10 8v8M12.500 8v8" /></SmallButton>
          <div className="h-[26px]" />
          <SmallButton label="Rechts"><path d="m7 4 6 6-6 6" strokeWidth="4" /></SmallButton>
          <SmallButton label="Links"><path d="m13 4-6 6 6 6" strokeWidth="4" /></SmallButton>
        </div>
      </div>
      <div className="mx-px mt-px grid grid-cols-[1fr_51px_97px_50px] items-center gap-x-[5px] border border-[#e4e4e4] pt-[2px] pr-[3px] pb-px text-right whitespace-nowrap text-[#202020]">
        <span>Laagkleur</span>
        <button aria-label="Laagkleur" className="h-[15px] border border-[#600000] bg-[#ff0000]" />
        <label htmlFor="speed">Snelheid (mm/m)</label>
        <Spin id="speed" value="6000" box="w-[50px]" align="text-right" />
        <label htmlFor="passes">Aantal passages</label>
        <Spin id="passes" value="1" box="w-[51px]" align="text-right" />
        <label htmlFor="power">Maximaal vermogen (%)</label>
        <Spin id="power" value="20.00" box="w-[50px]" align="text-right" />
        <label htmlFor="interval" className="text-[#909090]">Interval (mm)</label>
        <Spin id="interval" value="0.100" box="w-[51px]" align="text-center" dim />
      </div>
      <Tabs
        className="mt-px"
        items={[
          { label: "Sneden/lagen", cls: "w-[76px]" },
          { label: "Verplaatsen", cls: "w-[67px]" },
          { label: "Bedieningspaneel", cls: "w-[89px]" },
          { label: "Variabele tekst", cls: "w-[79px]" },
          { label: "Objecteigenschappen", cls: "flex-1" },
        ]}
      />
    </section>
  )
}

const btn = "flex items-center justify-center border border-[#b0b0b0] bg-[#e1e1e1] text-[#202020]"

function LaserPanel() {
  return (
    <section className="mt-1 flex flex-1 flex-col text-[#202020]">
      <DockTitle title="Laser" />
      <p className="h-[18px] leading-[18px]">Disconnected</p>
      <div className="flex flex-col gap-[3px] pr-[2px] pl-px">
        <div className="grid grid-cols-3 gap-1">
          <button className={clsx(btn, "h-[49px] gap-px")}>
            <svg width="13" height="13"><path d="M0 0h4.500v13H0zM8 0h4.500v13H8z" /></svg>Pauze
          </button>
          <button className={clsx(btn, "h-[49px] gap-px")}>
            <svg width="13" height="13"><path d="M0 0h13v13H0z" /></svg>Stoppen
          </button>
          <button className={clsx(btn, "h-[49px] gap-[2px]")}>
            <svg width="12" height="13"><path d="m0 0 12 6.500L0 13z" /></svg>Starten
          </button>
        </div>
        <div className="grid grid-cols-4 gap-1">
          <button className={clsx(btn, "h-[48px] gap-px")}>
            <svg width="14" height="14" fill="none" stroke="#000" strokeWidth="2"><path d="M1 5V1h4M9 1h4v4M13 9v4H9M5 13H1V9M1 6v2M13 6v2" /></svg>Kader
          </button>
          <button className={clsx(btn, "h-[48px] gap-px")}>
            <svg width="14" height="14" fill="none" stroke="#000" strokeWidth="1.8"><circle cx="7" cy="7" r="5.8" strokeDasharray="5 1.1" /></svg>Kader
          </button>
          <button className={clsx(btn, "h-[48px]")}>Opslaan GCode</button>
          <button className={clsx(btn, "h-[48px]")}>Uitvoeren GCode</button>
        </div>
      </div>
      <div className="mt-[2px] grid grid-cols-[97px_97px_1fr_107px] items-center gap-x-[5px] pl-px">
        <button className={clsx(btn, "h-[18px] gap-px")}>
          <svg width="14" height="12" viewBox="0 0 14 12" fill="none" stroke="#000" strokeWidth="1.8"><path d="M0 6.500 7 .9l7 5.600M2.500 5v6.200h3V7.500h3v3.700h3V5M11 1v3" /></svg>Beginstand
        </button>
        <button className={clsx(btn, "h-[18px]")}>Naar beginstand</button>
        <label htmlFor="from" className="text-right">Begint vanaf:</label>
        <Select id="from" value="Huidige positie" className="h-[18px] border-[#b0b0b0] bg-[#e1e1e1] text-[#5c1a20]" selectClass="px-px" />
      </div>

      <div className="flex">
        <div className="mt-[31px] flex w-[206px] flex-col">
          <Toggle label="Snijd geselecteerde objecten" on tone="green" className="h-[17px]" />
          <Toggle label="Selectie-oorsprong gebruiken" tone="red" className="h-[17px]" />
          <Toggle label="Optimaliseer snijtraject" on tone="green" className="h-[20px]" />
        </div>
        <div className="flex flex-1 flex-col gap-px pr-[2px]">
          <div className="flex items-center justify-end gap-[6px]">
            <span>Oorsprong taak</span>
            <fieldset aria-label="Oorsprong taak" className="grid h-[46px] w-[104px] grid-cols-3 items-center border border-[#e4e4e4] pt-[2px]">
              {Array.from({ length: 9 }, (_, i) => (
                <input
                  key={i}
                  type="radio"
                  name="origin"
                  aria-label={`Oorsprong ${i + 1}`}
                  defaultChecked={i === 6}
                  className="size-[11px] appearance-none rounded-full border border-[#333] bg-white checked:bg-[radial-gradient(#222_40%,#fff_50%)]"
                />
              ))}
            </fieldset>
          </div>
          <button className={clsx(btn, "h-[18px]")}>
            <svg width="14" height="14" fill="none" stroke="#111" strokeWidth="1.3"><path d="M7 0v3M7 11v3M0 7h3M11 7h3" /><path d="M7 4v6M4 7h6" stroke="#f00" strokeWidth="2.4" /></svg>
            Toon laatste positie
          </button>
          <button className={clsx(btn, "h-[18px]")}>Optimalisatie-instellingen</button>
        </div>
      </div>
      <div className="mt-[2px] flex gap-1 pl-px">
        <button className={clsx(btn, "mr-[2px] h-[18px] w-[61px]")}>Apparaten</button>
        <Select id="port" name="Poort" value="COM4" className="h-[18px] flex-1 border-[#b0b0b0] bg-[#e1e1e1]" />
        <div className="relative flex flex-1">
          <Select id="device" name="Apparaat" value="A70 Max" className="h-[18px] flex-1 border-[#b0b0b0] bg-[#e1e1e1]" selectClass="pl-4" />
          <span className="pointer-events-none absolute top-1 left-[3px] bg-white text-[7px] leading-[9px] italic">grbl</span>
        </div>
      </div>
      <div className="mt-auto mb-px flex">
        <Tabs items={[{ label: "Laser", cls: "w-[43px]" }, { label: "Materiaalbibliotheek", cls: "w-[96px]" }]} />
        <div className="flex-1 border-t border-[#c0c0c0]" />
      </div>
    </section>
  )
}

/* ---------- bottom bars ---------- */

function Palette() {
  return (
    <div className="flex h-7 items-center border-t border-white bg-[#f0f0f0] pb-[2px] font-['Liberation_Sans',sans-serif] text-[10px]">
      <Handle />
      <div className="grid w-[776px] grid-cols-30">
        {swatches.map((s) => (
          <button key={s.id} className={clsx("flex h-6 items-center justify-center", s.id === "02" && "border border-[#99d1ff] bg-[#c0dcf3]")}>
            <span className={clsx("flex h-5 w-5 items-center justify-center", s.cls)}>{s.id}</span>
          </button>
        ))}
      </div>
      <Sep />
      <div className="grid w-[52px] grid-cols-2">
        <button className="mx-auto flex h-5 w-5 items-center justify-center bg-[#f36926] text-[#401000]">T1</button>
        <button className="mx-auto flex h-5 w-5 items-center justify-center bg-[#0c96d9] text-white">T2</button>
      </div>
    </div>
  )
}

function StatusBar() {
  return (
    <footer className="flex h-[17px] items-center bg-[#f0f0f0] pt-[2px] text-[#202020]">
      <div className="flex w-[776px] items-center [&>*]:h-[14px] [&>*]:border-r [&>*]:border-[#dadada]">
        <Toggle label="Verplaatsen" on tone="green" className="w-[74px] pl-px" />
        <Toggle label="Grootte" on tone="green" className="w-[60px] pl-[3px]" />
        <Toggle label="Draaien" on tone="green" className="w-[59px] pl-[3px]" />
        <Toggle label="Kantelen" on tone="green" className="w-[70px] pl-[3px]" />
        <span className="flex flex-1 items-center pl-[3px]">x: 450.00, y: 294.00 mm</span>
      </div>
      <span className="pl-[3px]">Projectbestand opgeslagen als giek ontwerp.</span>
    </footer>
  )
}

function AppButton({ label, active, running, children }: { label: string; active?: boolean; running?: boolean; children: ReactNode }) {
  return (
    <button
      aria-label={label}
      className={clsx("flex h-full items-center justify-center border-b-2", active && "bg-[#5a5054]", running ? "border-[#e8c0a0]" : "border-transparent")}
    >
      <svg width="20" height="20" viewBox="0 0 20 20" fill="none" aria-hidden="true">{children}</svg>
    </button>
  )
}

function ChromeLogo() {
  return (
    <>
      <circle cx="10" cy="10" r="10" fill="#fbc116" />
      <path d="M10 10 1.300 5A10 10 0 0 1 18.700 5z" fill="#ea4335" />
      <path d="M10 10 1.300 5A10 10 0 0 0 10 20l4.300-7.500z" fill="#2da94f" />
      <circle cx="10" cy="10" r="4.8" fill="#fff" />
      <circle cx="10" cy="10" r="3.8" fill="#3c7de6" />
    </>
  )
}

function Taskbar() {
  return (
    <div className="flex h-[34px] items-center border-t border-[#8c8c8c] bg-[#2b1e24] font-['Noto_Sans',sans-serif] text-white">
      <button aria-label="Start" className="flex h-full w-10 items-center justify-center">
        <svg width="14" height="14" fill="#fff"><path d="M0 2l6-.9v5.500H0zM6.800 1 14 0v6.600H6.800zM0 7.400h6v5.500L0 12zM6.800 7.400H14V14l-7.200-1z" /></svg>
      </button>
      <label className="flex h-full w-[240px] items-center bg-[#f2f2f2] pl-[10px] text-[12px] text-[#404040]">
        <svg width="14" height="14" fill="none" stroke="#303030" strokeWidth="1.2"><circle cx="8.5" cy="5.5" r="4.8" /><path d="M5 9 .5 13.500" /></svg>
        <input aria-label="Zoeken" placeholder="Typ hier om te zoeken" className="ml-[9px] w-[140px] bg-transparent outline-none placeholder:text-[#484848]" />
        <svg width="54" height="26" viewBox="0 0 54 26" className="ml-1" aria-hidden="true">
          <path d="M23 3q1.500 8.500 9 10-7.500 1.500-9 10-1.500-8.500-9-10 7.500-1.500 9-10z" fill="#f9bd24" stroke="#f9bd24" strokeWidth="2" strokeLinejoin="round" />
          <path d="M42 11q1 4.500 5 5.500-4 1-5 5.500-1-4.500-5-5.500 4-1 5-5.500z" fill="#fbc53c" />
          <path d="M6 16.500 8 19l3.500-.5-2 2.500 1 3-3-1.500-3 2 .5-3.500-2.500-2 3.500-.5z" fill="#1f9cf0" />
          <circle cx="37" cy="5" r="1.8" fill="#e8623c" />
          <circle cx="52" cy="21.5" r="1.8" fill="#7cc04c" />
        </svg>
      </label>
      <div className="grid h-full w-[532px] grid-cols-13">
        <AppButton label="Taakweergave">
          <path d="M3.500 4v1.500h8V4M3.500 16v-1.500h8V16M3.500 7.500h8v5h-8zM15.500 4v2M15.500 10v6" stroke="#fff" strokeWidth="1.2" />
          <path d="M14.500 7h2v2h-2z" fill="#fff" />
        </AppButton>
        <AppButton label="Copilot">
          <path d="M5.500 1.500H12q2 0 2.500 2l.5 2h-3q-2 0-2.500 2L7 15H3.500Q0 15 1 11l2.500-8q.5-1.500 2-1.500z" fill="#2a8ce0" />
          <path d="M1.500 9.500 3.500 3.500q.5-2 2-2H8L5.500 10l-1 4.800Q0 15 1 11z" fill="#34b4a4" />
          <path d="M1 11q2 2.500 5 1.500L5.500 15h-2Q.5 15 1 11z" fill="#f0c83c" />
          <path d="M14.500 18.500H8q-2 0-2.500-2L5 14.500h3q2 0 2.500-2L13 5h3.500Q20 5 19 9l-2.500 8q-.5 1.500-2 1.500z" fill="#e85a8c" />
          <path d="M13 5h3.500Q20 5 19 9l-1 3-6.500-2z" fill="#a05ae0" />
          <path d="M5.500 16.500 5 14.500h3q1.500 0 2.200-1l2.300 5H8q-2 0-2.500-2z" fill="#f29a3c" />
        </AppButton>
        <AppButton label="Plaknotities">
          <path d="M1 1h18v18H1z" fill="#fdd608" /><path d="M10 10h9l-9 9z" fill="#4a4a4a" /><path d="M19 10v9h-9z" fill="#c8a010" />
        </AppButton>
        <AppButton label="Knippen">
          <path d="M8 1.500Q2 3 3 9q1 3 5 4" stroke="#c43a2a" strokeWidth="3.5" />
          <path d="M9 2q7-1 7.500 5 0 4-4 6" stroke="#c43a2a" strokeWidth="3" />
          <path d="M8 3l3.500 11M12.500 3 9 14" stroke="#e8eef4" strokeWidth="2" />
          <circle cx="7" cy="16.5" r="2.2" stroke="#2a90e0" strokeWidth="1.5" /><circle cx="13" cy="16.5" r="2.2" stroke="#2a90e0" strokeWidth="1.5" />
        </AppButton>
        <AppButton label="Edge">
          <circle cx="10" cy="10" r="9.8" fill="#1b84d8" />
          <path d="M.5 9A9.800 9.800 0 0 1 19.800 10q0 4-4 4.500-4 0-3.500-2 1-1 .5-3Q11 6 6.500 6.500 2 7 .5 9z" fill="#3cc8a0" />
          <path d="M.5 9A9.800 9.800 0 0 1 13 .7q-1 5-6.500 5.800Q2 7 .5 9z" fill="#28b4dc" />
          <path d="M.3 10Q2 6.500 6.500 6.500q5 0 6 4Q9 8 7 12q-1 4 4 7.500Q1.500 20 .3 10z" fill="#1468b8" />
          <path d="M12.500 10.500q1 1.500-.2 2.500-.3 1.500 3.500 1.500 2 0 3.500-1.500-1 3-4 4-5 1-7-3Q8 10 12.500 10.500z" fill="#2b1e24" />
        </AppButton>
        <AppButton label="Photoshop">
          <rect x="1.5" y="1" width="17" height="16" rx="1" fill="#1c58a8" />
          <text x="10" y="12" textAnchor="middle" fill="#d8ecff" className="text-[8px] font-bold">Ps</text>
        </AppButton>
        <AppButton label="Verkenner" running>
          <path d="M1 4q0-1 1-1h5l2 2h9v12H1z" fill="#e8a820" /><path d="M1 7h18v10H1z" fill="#fcd462" />
          <path d="M4 18v-5q0-2 2-2h8q2 0 2 2v5h-3.500v-3h-5v3z" fill="#3a94dc" />
        </AppButton>
        <AppButton label="Excel">
          <path d="M6 1h14v18H6z" fill="#21a366" /><path d="M13 1h7v6h-7z" fill="#33c481" /><path d="M6 10h14v9H6z" fill="#185c37" /><path d="M13 7h7v5h-7z" fill="#107c41" />
          <rect x="0" y="5" width="10.5" height="10" rx="1" fill="#107c41" />
          <text x="5.2" y="13" textAnchor="middle" fill="#fff" className="text-[8px] font-bold">X</text>
        </AppButton>
        <AppButton label="Acrobat">
          <rect x="1" y="1" width="18" height="18" rx="3" fill="#b30b00" />
          <path d="M4.500 14.500q4-2 5-8.500 0-2 .8-.5.2 6 5.700 6.500 1 .8-1 .7-5-.7-9 2-1.500 1-1.500-.2z" stroke="#fff" strokeWidth="1.2" />
        </AppButton>
        <AppButton label="Word">
          <path d="M6 1h14v18H6z" fill="#2b7cd3" /><path d="M6 1h14v5H6z" fill="#41a5ee" /><path d="M6 14h14v5H6z" fill="#103f91" />
          <rect x="0" y="5" width="10.5" height="10" rx="1" fill="#185abd" />
          <text x="5.2" y="13" textAnchor="middle" fill="#fff" className="text-[8px] font-bold">W</text>
        </AppButton>
        <AppButton label="Chrome" running>
          <ChromeLogo />
          <circle cx="15" cy="15" r="5" fill="#383838" /><path d="M12 13l2 2 1-2 3 4-4 1z" fill="#d0d0d0" />
        </AppButton>
        <AppButton label="Chrome werk">
          <ChromeLogo />
          <circle cx="15" cy="15" r="5" fill="#a8c8f4" /><circle cx="15" cy="15" r="1.6" stroke="#2a5ca8" /><path d="M16.600 13.500V16q1 1 1.400-.8A3.200 3.200 0 1 0 16 18" stroke="#2a5ca8" />
        </AppButton>
        <AppButton label="LightBurn" active running>
          <rect width="20" height="20" rx="2" fill="#7c1422" />
          <path d="M4 20 20 3v15q0 2-2 2z" fill="#d8303a" />
          <path d="M1 5.500Q8-.5 15 4" stroke="#fff" strokeWidth="1.6" />
          <path d="M2.500 11q1.500-4 6.500-4 5 .5 7.500 5 2 4-.5 7H5q6 0 6.500-3 0-2-3-1.500-2 1.500-4 0 2-1.500 3-3-3 1-5-.5z" fill="#fff" />
        </AppButton>
      </div>
      <div className="ml-auto flex h-full items-center">
        <button aria-label="Verborgen pictogrammen" className="mr-[9px]">
          <svg width="11" height="7" fill="none" stroke="#fff" strokeWidth="1.2"><path d="m.5 6 5-5 5 5" /></svg>
        </button>
        <div className="flex items-center gap-[6px]">
          <svg width="14" height="14" fill="none" stroke="#fff"><rect x="2" y="4" width="7" height="6.5" rx="1" /><path d="m9 6.500 3-1.500v5L9 8.500M4 2.500Q7-.5 10 2.500M4 12q3 2 6 0" /></svg>
          <svg width="14" height="14" fill="none" stroke="#fff"><path d="M5 2.500h8.500v7H3.500V6M8.500 9.500v3M5 12.500h7M.5.5h4v4h-4zM2.500 4.500v8" /></svg>
          <svg width="14" height="14" fill="none" stroke="#fff"><path d="M.5 3v10h9M.5 3l13-2v8M10 4a3 3 0 1 0-1 4M4 6h5" /><circle cx="10.5" cy="11" r="3" fill="#2a7ad8" stroke="none" /></svg>
          <svg width="14" height="14" fill="none" stroke="#fff"><path d="M.5 5v4h2L5.500 12V2L2.500 5zM7.500 5q1.500 2 0 4M9.500 3q3 4 0 8M11.500 1.500q4.500 5.500 0 11" /></svg>
        </div>
        <span className="ml-2 text-[10px]">NLD</span>
        <div className="ml-[7px] w-14 text-center leading-[15px]">
          <div>15:23</div>
          <div>20/06/2025</div>
        </div>
        <button aria-label="Meldingen" className="mr-4 ml-[11px]">
          <svg width="14" height="14"><path d="M0 0h14v10h-4v4l-4-4H0z" fill="#fff" /><path d="M2 3h10M2 5.500h10M2 8h5" stroke="#2b1e24" /></svg>
        </button>
        <div className="mr-[3px] h-full w-px bg-[#6c6266]" />
      </div>
    </div>
  )
}

export default function App() {
  return (
    <div className="flex h-screen flex-col overflow-hidden bg-[#f0f0f0] font-['Roboto',sans-serif] text-[9px] leading-[12px]">
      <TitleBar />
      <MenuBar />
      <div className="relative">
        <MainToolbar />
        <div role="tooltip" className="absolute top-[22px] left-[393px] z-10 border border-[#767676] bg-white px-1 text-[10px] leading-[14px] whitespace-nowrap text-[#575757] shadow-[2px_2px_2px_rgba(0,0,0,0.4)]">
          Zoomen naar kaderselectie (Ctrl/⌘ + Shift + A)
        </div>
      </div>
      <PropertyToolbar />
      <div className="flex min-h-0 flex-1">
        <SideTools />
        <div className="w-[2px] shrink-0" />
        <WorkArea />
        <div className="ml-[6px] flex w-[417px] shrink-0 flex-col">
          <CutsPanel />
          <LaserPanel />
        </div>
      </div>
      <Palette />
      <StatusBar />
      <Taskbar />
    </div>
  )
}
